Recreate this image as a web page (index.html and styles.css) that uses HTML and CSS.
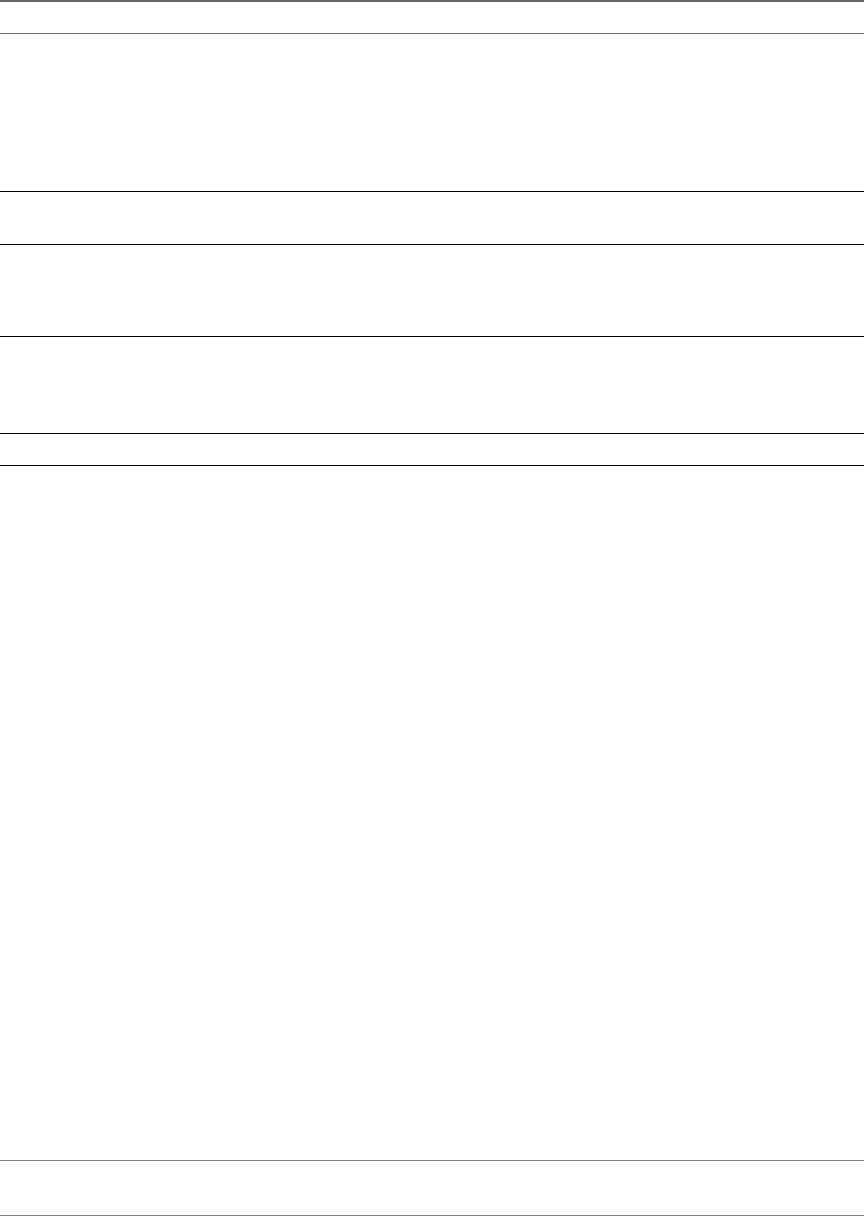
FILE: index.html
```html
<!DOCTYPE html>
<html lang="en">
<head>
    <meta charset="UTF-8" />
    <meta name="viewport" content="width=device-width, initial-scale=1.0" />
    <title>Page</title>
    <link rel="stylesheet" href="styles.css">
</head>
<body>
<main class="page">
    <header class="page__top"></header>
    <section class="page__block page__block--intro"></section>
    <section class="page__block page__block--row"></section>
    <section class="page__block page__block--mid"></section>
    <section class="page__block page__block--mid2"></section>
    <section class="page__block page__block--thin"></section>
    <section class="page__block page__block--body"></section>
    <footer class="page__footer"></footer>
</main>
</body>
</html>
```
FILE: styles.css
```css
*,
*::before,
*::after {
    box-sizing: border-box;
}

html,
body {
    margin: 0;
    padding: 0;
}

body {
    font-family: 'Liberation Sans', sans-serif;
    background: #fff;
}

.page {
    display: flex;
    flex-direction: column;
    width: 100%;
}

.page__top {
    height: 34px;
    border-top: 2px solid #666;
    border-bottom: 1px solid #6e6e6e;
}

.page__block {
    border-bottom: 1px solid #000;
}
.page__block--intro {
    height: 158px;
}
.page__block--row {
    height: 53px;
}
.page__block--mid {
    height: 92px;
}
.page__block--mid2 {
    height: 97px;
}
.page__block--thin {
    height: 32px;
}
.page__block--body {
    height: 695px;
    border-bottom: 1px solid #808080;
}

.page__footer {
    height: 55px;
    border-bottom: 1px solid #808080;
}
```
